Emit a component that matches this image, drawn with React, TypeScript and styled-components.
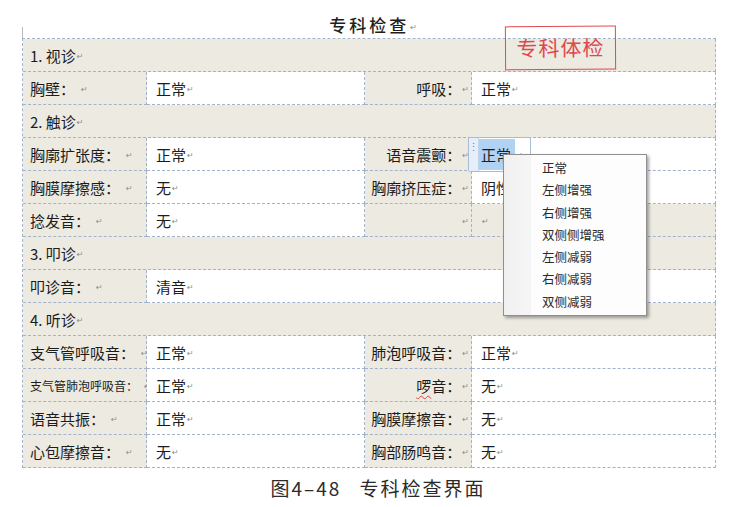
import React from 'react';
import styled, { createGlobalStyle } from 'styled-components';

type Row =
  | { kind: 'section'; text: string }
  | {
      kind: 'item';
      label: string;
      value: string;
      label2?: string;
      value2?: string;
      small?: boolean;
      wide?: boolean;
      blankRight?: boolean;
      wavy?: boolean;
      control?: boolean;
    };

const rows: Row[] = [
  { kind: 'section', text: '1. 视诊' },
  { kind: 'item', label: '胸壁：', value: '正常', label2: '呼吸：', value2: '正常' },
  { kind: 'section', text: '2. 触诊' },
  { kind: 'item', label: '胸廓扩张度：', value: '正常', label2: '语音震颤：', value2: '正常', control: true },
  { kind: 'item', label: '胸膜摩擦感：', value: '无', label2: '胸廓挤压症：', value2: '阴性' },
  { kind: 'item', label: '捻发音：', value: '无', blankRight: true },
  { kind: 'section', text: '3. 叩诊' },
  { kind: 'item', label: '叩诊音：', value: '清音', wide: true },
  { kind: 'section', text: '4. 听诊' },
  { kind: 'item', label: '支气管呼吸音：', value: '正常', label2: '肺泡呼吸音：', value2: '正常' },
  { kind: 'item', label: '支气管肺泡呼吸音：', value: '正常', label2: '啰音：', value2: '无', small: true, wavy: true },
  { kind: 'item', label: '语音共振：', value: '正常', label2: '胸膜摩擦音：', value2: '无' },
  { kind: 'item', label: '心包摩擦音：', value: '无', label2: '胸部肠鸣音：', value2: '无' },
];

const menuItems = ['正常', '左侧增强', '右侧增强', '双侧侧增强', '左侧减弱', '右侧减弱', '双侧减弱'];

const App: React.FC = () => {
  return (
    <Page>
      <GlobalStyle />
      <TitleBar>
        <Title>专科检查</Title>
        <Mark>↵</Mark>
      </TitleBar>
      <Stamp>专科体检</Stamp>
      <Table>
        {rows.map((row, i) => {
          if (row.kind === 'section') {
            return (
              <Cell key={i} $tone="label" $span={4}>
                {row.text}
                <Mark>↵</Mark>
              </Cell>
            );
          }
          return (
            <React.Fragment key={i}>
              <Cell $tone="label" $small={row.small}>
                {row.label}
                <Mark $gap>↵</Mark>
              </Cell>
              <Cell $tone="value" $span={row.wide ? 3 : 1} $indent>
                {row.value}
                <Mark>↵</Mark>
              </Cell>
              {!row.wide && (
                <>
                  <Cell $tone="label" $align="right">
                    {row.wavy ? <Wavy>啰</Wavy> : null}
                    {row.wavy ? '音：' : row.label2}
                    <Mark>↵</Mark>
                  </Cell>
                  <Cell $tone={row.blankRight ? 'label' : 'value'} $indent $anchor={row.control}>
                    {row.control ? (
                      <>
                        <Control>
                          <Grip>⋮</Grip>
                          <Picked>{row.value2}</Picked>
                          <Mark>↵</Mark>
                        </Control>
                        <Menu>
                          {menuItems.map((m) => (
                            <MenuItem key={m}>{m}</MenuItem>
                          ))}
                        </Menu>
                      </>
                    ) : (
                      <>
                        {row.value2}
                        <Mark>↵</Mark>
                      </>
                    )}
                  </Cell>
                </>
              )}
            </React.Fragment>
          );
        })}
      </Table>
      <Caption>
        图4–48<CaptionGap />专科检查界面
      </Caption>
    </Page>
  );
};

export default App;

const GlobalStyle = createGlobalStyle`
  body {
    margin: 0;
    background: #ffffff;
    font-family: "Noto Sans CJK SC", "Noto Sans", sans-serif;
  }
`;

const Page = styled.div`
  position: relative;
  width: 740px;
  height: 507px;
  background: #ffffff;
  overflow: hidden;
`;

const TitleBar = styled.div`
  position: relative;
  height: 38px;
  box-sizing: border-box;
  padding: 14px 0 0 6px;
  display: flex;
  justify-content: center;
  align-items: flex-start;

  &::before {
    content: '';
    position: absolute;
    left: 22px;
    top: 27px;
    width: 1px;
    height: 11px;
    background: #b8b8b8;
  }
`;

const Title = styled.span`
  font-size: 17px;
  line-height: 22px;
  font-weight: 500;
  letter-spacing: 3px;
  color: #1e1e1e;
`;

const Mark = styled.span<{ $gap?: boolean }>`
  font-family: "DejaVu Sans", sans-serif;
  font-size: 8px;
  line-height: 8px;
  color: #8c8c8c;
  margin-left: ${(p) => (p.$gap ? '6px' : '1px')};
  align-self: center;
  padding-top: 4px;
`;

const Stamp = styled.div`
  position: absolute;
  left: 505px;
  top: 26px;
  width: 111px;
  height: 44px;
  box-sizing: border-box;
  border: 1.5px solid #df4a50;
  color: #e0474d;
  font-size: 21px;
  line-height: 40px;
  text-align: center;
  letter-spacing: 1px;
  transform: rotate(-0.4deg);
  z-index: 3;
`;

const Table = styled.div`
  margin-left: 22px;
  width: 694px;
  display: grid;
  grid-template-columns: 124px 218px 107px 244px;
  grid-auto-rows: 33px;
  border-top: 1px dashed #a3b3cb;
  border-left: 1px dashed #a3b3cb;
  box-sizing: border-box;
`;

const Cell = styled.div<{
  $tone: 'label' | 'value';
  $span?: number;
  $align?: 'left' | 'right';
  $small?: boolean;
  $indent?: boolean;
  $anchor?: boolean;
}>`
  position: ${(p) => (p.$anchor ? 'relative' : 'static')};
  grid-column: span ${(p) => p.$span ?? 1};
  display: flex;
  align-items: center;
  justify-content: ${(p) => (p.$align === 'right' ? 'flex-end' : 'flex-start')};
  box-sizing: border-box;
  padding: ${(p) => (p.$align === 'right' ? '0 2px 0 0' : p.$indent ? '0 0 0 9px' : '0 0 0 7px')};
  border-right: 1px dashed #a3b3cb;
  border-bottom: 1px dashed #a3b3cb;
  background: ${(p) => (p.$tone === 'label' ? '#edeae1' : '#ffffff')};
  color: #1c1c1c;
  font-size: ${(p) => (p.$small ? '12px' : '15px')};
  white-space: nowrap;
  overflow: visible;
`;

const Wavy = styled.span`
  text-decoration: underline wavy #e0403c;
  text-decoration-thickness: 1px;
  text-underline-offset: 3px;
`;

const Control = styled.div`
  display: inline-flex;
  align-items: center;
  height: 35px;
  margin-left: -13px;
  width: 63px;
  box-sizing: border-box;
  border: 1px solid #a9bcd6;
  border-radius: 2px;
  background: #ffffff;
`;

const Grip = styled.span`
  width: 10px;
  height: 100%;
  display: flex;
  align-items: flex-start;
  justify-content: center;
  padding-top: 2px;
  box-sizing: border-box;
  font-size: 11px;
  line-height: 12px;
  color: #5d8ccc;
  background: #e6eef9;
  border-right: 1px solid #c2d3ea;
`;

const Picked = styled.span`
  display: flex;
  align-items: center;
  height: 31px;
  padding: 0 4px 0 2px;
  background: #b1d2f3;
  font-size: 15px;
  color: #1c1c1c;
`;

const Menu = styled.div`
  position: absolute;
  left: 31px;
  top: 16px;
  width: 144px;
  box-sizing: border-box;
  padding: 2px 0;
  border: 1px solid #8f8f8f;
  background: linear-gradient(to right, #f0f0f0 0, #f6f6f6 26px, #e8e8e8 26px, #fdfdfd 27px, #fdfdfd 100%);
  box-shadow: 2px 2px 3px rgba(0, 0, 0, 0.35);
  z-index: 5;
`;

const MenuItem = styled.div`
  height: 22.3px;
  line-height: 22px;
  padding-left: 38px;
  font-size: 12.5px;
  color: #2a2a2a;
`;

const Caption = styled.div`
  margin-top: 9px;
  text-align: center;
  font-size: 19px;
  line-height: 22px;
  letter-spacing: 2px;
  color: #2b2b2b;
  padding-left: 16px;
`;

const CaptionGap = styled.span`
  display: inline-block;
  width: 18px;
`;
